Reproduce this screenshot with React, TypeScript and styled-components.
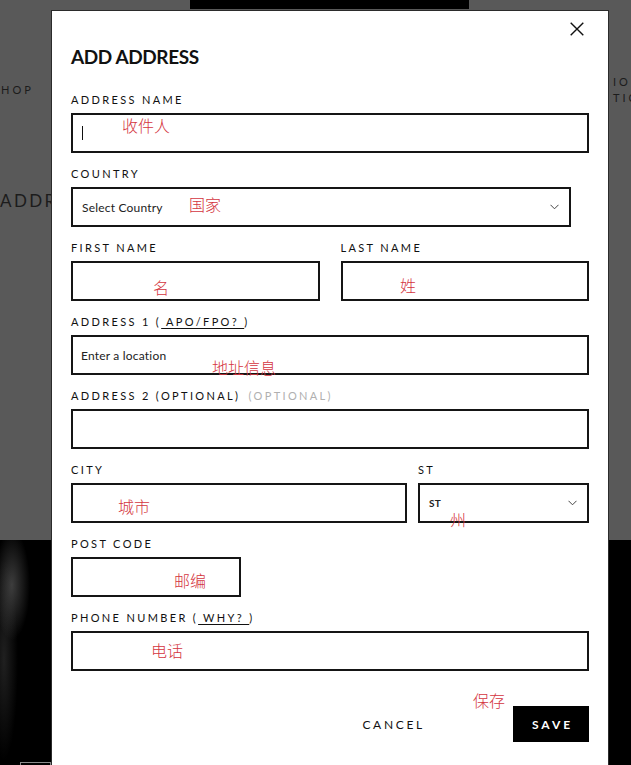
import styled, { createGlobalStyle } from "styled-components";

const GlobalStyle = createGlobalStyle`
  html, body {
    margin: 0;
    padding: 0;
  }
  body {
    font-family: Lato, "Liberation Sans", Arial, sans-serif;
    color: #111;
  }
  * {
    box-sizing: border-box;
  }
`;

const Page = styled.div`
  position: relative;
  width: 631px;
  height: 765px;
  overflow: hidden;
  background: #595959;
  display: flex;
  flex-direction: column;
`;

const TopBar = styled.div`
  margin-left: 190px;
  width: 279px;
  height: 9px;
  background: #000;
`;

const NavRow = styled.div`
  margin-top: 65px;
  display: flex;
  align-items: center;
  padding-left: 1px;
`;

const NavText = styled.span`
  font-size: 11px;
  line-height: 16px;
  letter-spacing: 3px;
  color: #1c1c1c;
  white-space: nowrap;
`;

const NavSpacer = styled.div`
  flex: 1;
`;

const NavColumn = styled.div`
  width: 18px;
  display: flex;
  flex-direction: column;
`;

const BackHeading = styled.div`
  margin-top: 85px;
  font-size: 17px;
  line-height: 20px;
  letter-spacing: 2.4px;
  color: #1c1c1c;
  white-space: nowrap;
`;

const Hero = styled.div`
  margin-top: auto;
  height: 225px;
  background:
    radial-gradient(ellipse 18px 55px at 12px 45px, rgba(110, 110, 110, 0.55), transparent 100%),
    radial-gradient(ellipse 14px 100px at 4px 120px, rgba(80, 80, 80, 0.4), transparent 100%),
    #000;
  display: flex;
  align-items: flex-end;
  padding-left: 20px;
`;

const HeroThumb = styled.div`
  width: 31px;
  height: 3px;
  border: 1px solid #8a8a8a;
  border-bottom: none;
`;

const Modal = styled.div`
  position: absolute;
  top: 10px;
  left: 51px;
  width: 558px;
  background: #fff;
  border: 1px solid #2b2b2b;
  border-bottom: none;
  padding: 34px 19px 60px;
`;

const CloseButton = styled.button`
  position: absolute;
  top: 6px;
  right: 19px;
  width: 24px;
  height: 24px;
  padding: 0;
  border: none;
  background: transparent;
  display: flex;
  align-items: center;
  justify-content: center;
  cursor: pointer;
`;

const Title = styled.h2`
  margin: 0 0 24px;
  font-size: 19px;
  line-height: 24px;
  font-weight: 700;
  letter-spacing: -0.4px;
  color: #111;
`;

const Form = styled.div`
  display: flex;
  flex-direction: column;
  gap: 14px;
`;

const Row = styled.div<{ $cols: string; $gap: number }>`
  display: grid;
  grid-template-columns: ${(p) => p.$cols};
  column-gap: ${(p) => p.$gap}px;
`;

const Field = styled.div<{ $width?: number }>`
  display: flex;
  flex-direction: column;
  width: ${(p) => (p.$width ? `${p.$width}px` : "auto")};
`;

const Label = styled.label`
  display: block;
  margin-bottom: 6px;
  font-size: 11px;
  line-height: 14px;
  letter-spacing: 2.35px;
  text-transform: uppercase;
  color: #111;
  white-space: nowrap;
`;

const LabelLink = styled.span`
  text-decoration: underline;
  text-underline-offset: 2px;
`;

const LabelMuted = styled.span`
  margin-left: 3px;
  color: #b0b0b0;
`;

const Box = styled.div`
  height: 40px;
  border: 2px solid #151515;
  display: flex;
  align-items: center;
  padding: 0 10px 0 8px;
  gap: 8px;
  background: #fff;
`;

const TextInput = styled.input`
  flex: 1;
  min-width: 0;
  height: 100%;
  border: none;
  outline: none;
  padding: 0;
  background: transparent;
  font-family: inherit;
  font-size: 12px;
  letter-spacing: 0.2px;
  color: #222;

  &::placeholder {
    color: #222;
  }
`;

const Caret = styled.span`
  width: 1px;
  height: 14px;
  margin-left: 1px;
  background: #111;
  flex-shrink: 0;
`;

const SelectValue = styled.span<{ $bold?: boolean }>`
  font-size: ${(p) => (p.$bold ? 10 : 12)}px;
  font-weight: ${(p) => (p.$bold ? 700 : 400)};
  letter-spacing: 0.2px;
  color: #222;
  padding-left: 1px;
  margin-right: auto;
`;

const Actions = styled.div`
  margin-top: 35px;
  display: flex;
  justify-content: flex-end;
  align-items: center;
  gap: 68px;
`;

const CancelButton = styled.button`
  border: none;
  background: transparent;
  padding: 0 20px;
  height: 36px;
  font-family: inherit;
  font-size: 12px;
  letter-spacing: 2.7px;
  color: #111;
  cursor: pointer;
`;

const SaveButton = styled.button`
  width: 76px;
  height: 36px;
  border: none;
  background: #000;
  color: #fff;
  padding: 0 0 0 3px;
  font-family: inherit;
  font-size: 12px;
  font-weight: 700;
  letter-spacing: 2.9px;
  cursor: pointer;
`;

const Note = styled.span<{ $x: number; $y: number }>`
  position: absolute;
  left: ${(p) => p.$x}px;
  top: ${(p) => p.$y}px;
  font-family: "Noto Sans CJK SC", sans-serif;
  font-size: 16px;
  line-height: 16px;
  font-weight: 300;
  color: #d43540;
  white-space: nowrap;
  pointer-events: none;
`;

const Chevron = () => (
  <svg width="9" height="6" viewBox="0 0 9 6" fill="none">
    <path d="M0.5 0.8 L4.5 4.8 L8.5 0.8" stroke="#444" strokeWidth="1" />
  </svg>
);

const CloseIcon = () => (
  <svg width="14" height="14" viewBox="0 0 14 14" fill="none">
    <path d="M0.7 0.7 L13.3 13.3 M13.3 0.7 L0.7 13.3" stroke="#111" strokeWidth="1.4" />
  </svg>
);

const notes = [
  { text: "收件人", x: 122, y: 117 },
  { text: "国家", x: 189, y: 196 },
  { text: "名", x: 153, y: 279 },
  { text: "姓", x: 400, y: 277 },
  { text: "地址信息", x: 212, y: 359 },
  { text: "城市", x: 118, y: 498 },
  { text: "州", x: 450, y: 511 },
  { text: "邮编", x: 174, y: 572 },
  { text: "电话", x: 151, y: 642 },
  { text: "保存", x: 473, y: 692 },
];

export default function App() {
  return (
    <>
      <GlobalStyle />
      <Page>
        <TopBar />
        <NavRow>
          <NavText>HOP</NavText>
          <NavSpacer />
          <NavColumn>
            <NavText>IO</NavText>
            <NavText>TIC</NavText>
          </NavColumn>
        </NavRow>
        <BackHeading>ADDRESS BOOK</BackHeading>
        <Hero>
          <HeroThumb />
        </Hero>

        <Modal>
          <CloseButton type="button" aria-label="Close">
            <CloseIcon />
          </CloseButton>
          <Title>ADD ADDRESS</Title>

          <Form>
            <Field>
              <Label>Address Name</Label>
              <Box>
                <Caret />
                <TextInput />
              </Box>
            </Field>

            <Field $width={500}>
              <Label>Country</Label>
              <Box>
                <SelectValue>Select Country</SelectValue>
                <Chevron />
              </Box>
            </Field>

            <Row $cols="1fr 1fr" $gap={21}>
              <Field>
                <Label>First Name</Label>
                <Box>
                  <TextInput />
                </Box>
              </Field>
              <Field>
                <Label>Last Name</Label>
                <Box>
                  <TextInput />
                </Box>
              </Field>
            </Row>

            <Field>
              <Label>
                Address 1 (<LabelLink>&nbsp;APO/FPO?&nbsp;</LabelLink>)
              </Label>
              <Box>
                <TextInput placeholder="Enter a location" />
              </Box>
            </Field>

            <Field>
              <Label>
                Address 2 (Optional) <LabelMuted>(Optional)</LabelMuted>
              </Label>
              <Box>
                <TextInput />
              </Box>
            </Field>

            <Row $cols="1fr 171px" $gap={11}>
              <Field>
                <Label>City</Label>
                <Box>
                  <TextInput />
                </Box>
              </Field>
              <Field>
                <Label>ST</Label>
                <Box>
                  <SelectValue $bold>ST</SelectValue>
                  <Chevron />
                </Box>
              </Field>
            </Row>

            <Field $width={170}>
              <Label>Post Code</Label>
              <Box>
                <TextInput />
              </Box>
            </Field>

            <Field>
              <Label>
                Phone Number (<LabelLink>&nbsp;Why?&nbsp;</LabelLink>)
              </Label>
              <Box>
                <TextInput />
              </Box>
            </Field>
          </Form>

          <Actions>
            <CancelButton type="button">CANCEL</CancelButton>
            <SaveButton type="button">SAVE</SaveButton>
          </Actions>
        </Modal>

        {notes.map((n) => (
          <Note key={n.text} $x={n.x} $y={n.y}>
            {n.text}
          </Note>
        ))}
      </Page>
    </>
  );
}
